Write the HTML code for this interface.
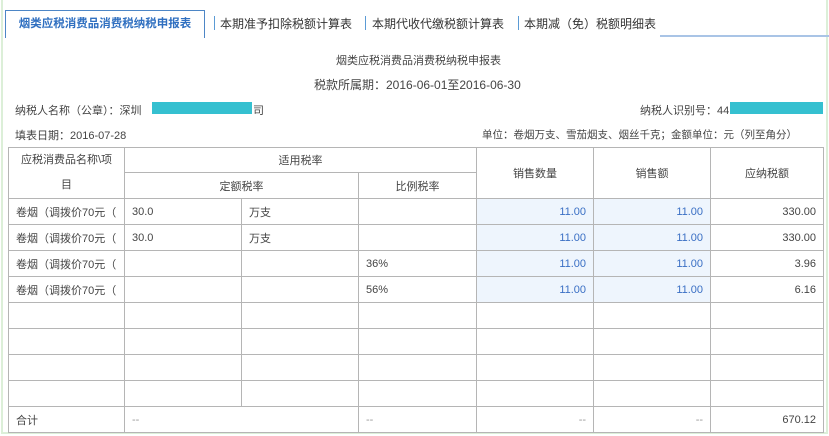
<!DOCTYPE html>
<html><head><meta charset="utf-8"><style>
*{margin:0;padding:0;box-sizing:border-box}
body{width:829px;height:436px;background:#fff;font-family:"Liberation Sans","Noto Sans CJK SC",sans-serif;font-size:11px;color:#444;position:relative;overflow:hidden}
.frame{position:absolute;left:1px;top:0;width:827px;height:434px;border:2px solid #dcefd8;border-top:none}
.tab{position:absolute;top:15px;font-size:12px;color:#333}
.sep{position:absolute;top:16px;width:1px;height:14px;background:#5b9bd5}
.active{position:absolute;left:5px;top:10px;width:200px;height:28px;border:1px solid #4d86c6;border-bottom:none;background:#fff;color:#2f6fc0;font-weight:bold;text-align:center;line-height:27px;font-size:11.5px}
.t{position:absolute;white-space:nowrap}
table{position:absolute;left:8px;top:147px;width:815px;border-collapse:collapse;table-layout:fixed}
td{border:1px solid #b5b5b5;height:26px;padding:0 7px;white-space:nowrap;overflow:hidden;font-size:11px}
.c{text-align:center}.r{text-align:right}
.b{background:#eef5fd;color:#3a6fc4;text-align:right}
</style></head><body>
<div class="frame"></div>
<div style="position:absolute;left:660px;top:35px;width:169px;height:2px;background:#a9c4e6"></div>
<div class="active">烟类应税消费品消费税纳税申报表</div>
<div class="sep" style="left:214px"></div><div class="tab" style="left:220px">本期准予扣除税额计算表</div>
<div class="sep" style="left:365px"></div><div class="tab" style="left:372px">本期代收代缴税额计算表</div>
<div class="sep" style="left:518px"></div><div class="tab" style="left:524px">本期减（免）税额明细表</div>
<div class="t" style="left:336px;top:52px;font-size:11px">烟类应税消费品消费税纳税申报表</div>
<div class="t" style="left:314px;top:76px;font-size:12px">税款所属期：2016-06-01至2016-06-30</div>
<div class="t" style="left:15px;top:102px">纳税人名称（公章）：深圳</div>
<div style="position:absolute;left:152px;top:102px;width:100px;height:12px;background:#35c0d0"></div>
<div class="t" style="left:253px;top:102px">司</div>
<div class="t" style="left:640px;top:102px">纳税人识别号：44</div>
<div style="position:absolute;left:730px;top:102px;width:93px;height:12px;background:#35c0d0"></div>
<div class="t" style="left:15px;top:127px">填表日期：2016-07-28</div>
<div class="t" style="left:482px;top:127px;font-size:10.5px">单位：卷烟万支、雪茄烟支、烟丝千克；金额单位：元（列至角分）</div>
<table>
<colgroup><col style="width:116px"><col style="width:117px"><col style="width:117px"><col style="width:118px"><col style="width:117px"><col style="width:117px"><col style="width:113px"></colgroup>
<tr><td class="c" rowspan="2" style="line-height:25px;padding:0 2px">应税消费品名称\项<br>目</td><td class="c" colspan="3" style="height:25px">适用税率</td><td class="c" rowspan="2">销售数量</td><td class="c" rowspan="2">销售额</td><td class="c" rowspan="2">应纳税额</td></tr>
<tr><td class="c" colspan="2">定额税率</td><td class="c">比例税率</td></tr>
<tr><td>卷烟（调拨价70元（</td><td>30.0</td><td>万支</td><td></td><td class="b">11.00</td><td class="b">11.00</td><td class="r">330.00</td></tr>
<tr><td>卷烟（调拨价70元（</td><td>30.0</td><td>万支</td><td></td><td class="b">11.00</td><td class="b">11.00</td><td class="r">330.00</td></tr>
<tr><td>卷烟（调拨价70元（</td><td></td><td></td><td>36%</td><td class="b">11.00</td><td class="b">11.00</td><td class="r">3.96</td></tr>
<tr><td>卷烟（调拨价70元（</td><td></td><td></td><td>56%</td><td class="b">11.00</td><td class="b">11.00</td><td class="r">6.16</td></tr>
<tr><td></td><td></td><td></td><td></td><td></td><td></td><td></td></tr>
<tr><td></td><td></td><td></td><td></td><td></td><td></td><td></td></tr>
<tr><td></td><td></td><td></td><td></td><td></td><td></td><td></td></tr>
<tr><td></td><td></td><td></td><td></td><td></td><td></td><td></td></tr>
<tr><td>合计</td><td colspan="2" style="color:#999">--</td><td style="color:#999">--</td><td class="r" style="color:#999">--</td><td class="r" style="color:#999">--</td><td class="r">670.12</td></tr>
</table>
</body></html>
